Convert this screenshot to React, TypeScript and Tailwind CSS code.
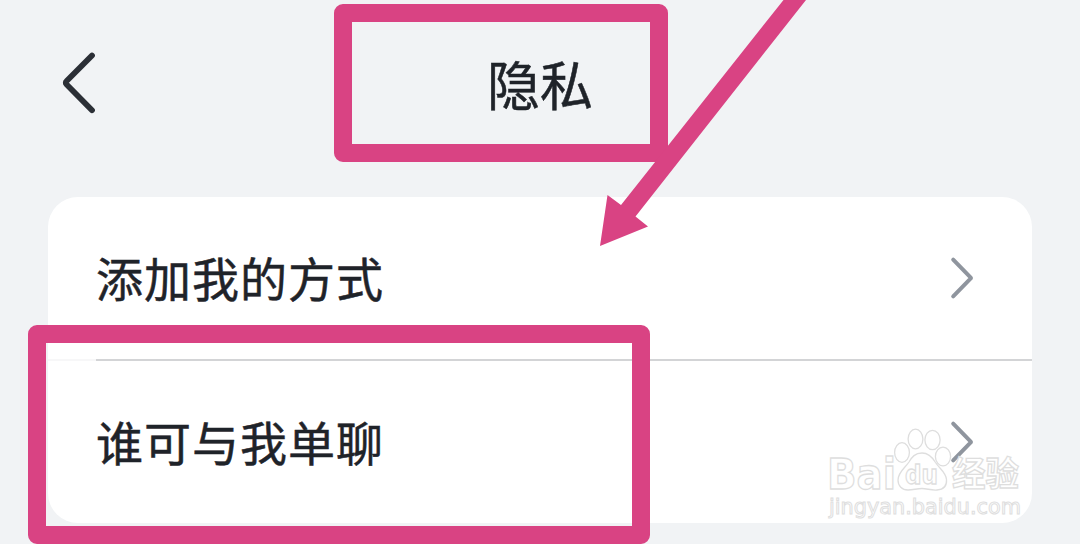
const ROWS = ['添加我的方式', '谁可与我单聊'];

function BackIcon() {
  return (
    <svg width="36" height="64" viewBox="0 0 36 64" fill="none">
      <path
        d="M32 5.5 6.4 31.3a2 2 0 0 0 0 2.9L32 60.2"
        stroke="#2b2f36"
        strokeWidth="5.8"
        strokeLinecap="round"
      />
    </svg>
  );
}

function ArrowIcon() {
  return (
    <svg width="24" height="44" viewBox="0 0 24 44" fill="none">
      <path
        d="M3.2 3.7 20.5 21.3a1 1 0 0 1 0 1.4L3.2 40.3"
        stroke="#8f959e"
        strokeWidth="4"
        strokeLinecap="round"
      />
    </svg>
  );
}

function Watermark() {
  return (
    <svg
      className="absolute left-[820px] top-[420px] font-['DejaVu_Sans','Noto_Sans_CJK_SC',sans-serif]"
      width="212"
      height="108"
      viewBox="820 420 212 108"
      fill="#fff"
      fillOpacity="0.85"
      stroke="#dedede"
      strokeWidth="1.3"
    >
      <text x="827" y="488.5" fontSize="42" fontWeight="700" textLength="69" lengthAdjust="spacingAndGlyphs">Bai</text>
      <ellipse cx="902" cy="452.5" rx="7.4" ry="9.8" />
      <ellipse cx="915.5" cy="439" rx="7.4" ry="9.8" />
      <ellipse cx="932.5" cy="440" rx="7.6" ry="9.6" />
      <ellipse cx="943" cy="456.5" rx="7.6" ry="9.4" />
      <path d="M922 453c-7 0-10 4-13 9-4 6-11 10-11 18 0 6 4 10 10 10 5 0 9-1.5 14-1.5s9 2 15 1.5c6-.5 10-4 9.500-10.500-.5-7-7-11-11-17-3-5-7-9.500-13.500-9.500z" />
      <text x="905" y="484" fontSize="26" fontWeight="700" textLength="33" lengthAdjust="spacingAndGlyphs">du</text>
      <text x="952" y="486" fontSize="34" fontWeight="700" textLength="67" lengthAdjust="spacingAndGlyphs" className="font-['Noto_Sans_CJK_SC',sans-serif]">经验</text>
      <text x="829" y="514" fontSize="20.5" strokeWidth="1" textLength="192" lengthAdjust="spacingAndGlyphs">jingyan.baidu.com</text>
    </svg>
  );
}

export default function App() {
  return (
    <div className="relative h-[544px] w-[1080px] overflow-hidden bg-[#f1f3f5] font-['Noto_Sans_CJK_SC',sans-serif] text-[#1f2329]">
      <header className="grid h-[197px] grid-cols-[1fr_auto_1fr] items-start px-[60px]">
        <button className="mt-[50px] w-9" aria-label="返回">
          <BackIcon />
        </button>
        <h1 className="mt-11 text-[53px] leading-[78px] [-webkit-text-stroke:0.5px_#1f2329]">隐私</h1>
      </header>

      <main className="mx-12 h-[326px] overflow-hidden rounded-[30px] bg-white">
        {ROWS.map((label, i) => (
          <div key={label}>
            {i > 0 && (
              <div className="flex h-0.5">
                <div className="w-12 bg-[#f7f7f8]" />
                <div className="flex-1 bg-[#d3d4d6]" />
              </div>
            )}
            <button className="flex h-[162px] w-full items-center justify-between pr-[58px] pl-12">
              <span className="pb-0.5 text-[47px] leading-[72px] tracking-[1px] [-webkit-text-stroke:0.5px_#1f2329]">{label}</span>
              <ArrowIcon />
            </button>
          </div>
        ))}
      </main>

      {/* annotations */}
      <div className="absolute left-[334px] top-1 h-[158px] w-[334px] rounded-[9px] border-[18px] border-[#d94383]" />
      <div className="absolute left-7 top-[325px] h-[219px] w-[622px] rounded-[9px] border-[18px] border-[#d94383]" />
      <svg className="absolute left-[590px] top-0" width="230" height="250" viewBox="590 0 230 250">
        <path d="M783.5 0 621 205 607.5 195 600 246 648 226.5 635.5 216.5 806 0z" fill="#d94383" />
      </svg>
      <Watermark />
    </div>
  );
}
